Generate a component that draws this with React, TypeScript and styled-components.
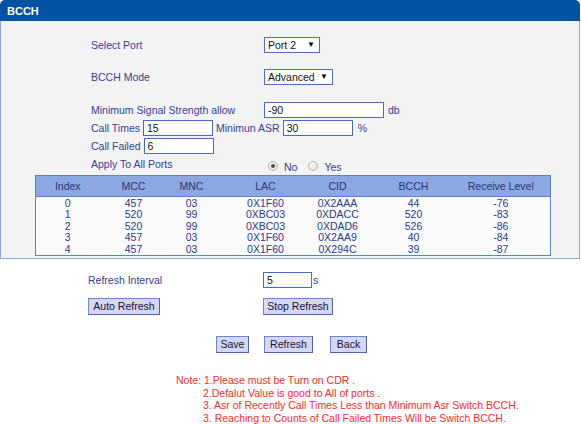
import React from "react";
import styled, { createGlobalStyle } from "styled-components";

const Global = createGlobalStyle`
  html, body { margin: 0; padding: 0; background: #ffffff; }
  body { font-family: "Liberation Sans", Arial, sans-serif; font-size: 10.5px; }
  * { box-sizing: border-box; }
`;

const LABEL = "#34409a";

const Page = styled.div`
  width: 581px;
  height: 424px;
  overflow: hidden;
  font-family: "Liberation Sans", Arial, sans-serif;
  font-size: 10.5px;
`;

const Panel = styled.section`
  width: 580px;
`;

const PanelHeader = styled.div`
  height: 21px;
  background: #0251a4;
  border-radius: 5px 5px 0 0;
  color: #ffffff;
  font-weight: bold;
  font-size: 11px;
  line-height: 22px;
  padding-left: 7px;
`;

const PanelBody = styled.div`
  background: #f3f3f3;
  border: 1px solid #86a4e6;
  border-top: none;
  padding-bottom: 2px;
  display: flex;
  flex-direction: column;
`;

const FieldRow = styled.div<{ $top: number }>`
  display: flex;
  align-items: center;
  margin-top: ${(p) => p.$top}px;
  height: 16px;
  padding-left: 90px;
`;

const Label = styled.span<{ $w?: number }>`
  color: ${LABEL};
  width: ${(p) => (p.$w ? `${p.$w}px` : "auto")};
  flex: none;
  line-height: 16px;
`;

const InlineRow = styled.div<{ $top: number }>`
  display: flex;
  align-items: center;
  gap: 3px;
  margin-top: ${(p) => p.$top}px;
  height: 16px;
  padding-left: 90px;
`;

const Unit = styled.span<{ $gap?: number }>`
  color: ${LABEL};
  margin-left: ${(p) => p.$gap ?? 0}px;
`;

const SelectBox = styled.div<{ $w: number }>`
  width: ${(p) => p.$w}px;
  height: 16px;
  background: #ffffff;
  border: 1px solid #4f6cc6;
  display: flex;
  align-items: center;
  justify-content: space-between;
  padding: 0 4px 0 3px;
  color: #111;
  line-height: 14px;
`;

const Arrow = styled.span`
  font-size: 8px;
  color: #000;
`;

const TextInput = styled.input<{ $w: number }>`
  width: ${(p) => p.$w}px;
  height: 16px;
  border: 1px solid #4a68c8;
  background: #ffffff;
  padding: 0 3px;
  margin: 0;
  font-family: "Liberation Sans", Arial, sans-serif;
  font-size: 10.5px;
  color: #111;
  outline: none;
`;

const ApplyRow = styled.div`
  display: flex;
  align-items: flex-start;
  margin-top: 2px;
  height: 19px;
  padding-left: 90px;
`;

const RadioGroup = styled.div`
  display: flex;
  align-items: center;
  padding-top: 4px;
  padding-left: 4px;
  height: 16px;
  color: ${LABEL};
`;

const Radio = styled.span<{ $checked?: boolean }>`
  width: 10px;
  height: 10px;
  border-radius: 50%;
  border: 1px solid #b4b4b4;
  background: radial-gradient(circle at 40% 35%, #ffffff 0%, #e6e6e6 60%, #d2d2d2 100%);
  display: inline-flex;
  align-items: center;
  justify-content: center;
  margin-right: 6px;
  &::after {
    content: "";
    width: 4px;
    height: 4px;
    border-radius: 50%;
    background: ${(p) => (p.$checked ? "#4a4a4a" : "transparent")};
  }
`;

const RadioText = styled.span<{ $mr?: number }>`
  margin-right: ${(p) => p.$mr ?? 0}px;
  margin-top: 2px;
`;

const Table = styled.table`
  margin-left: 34px;
  width: 515px;
  border: 1px solid #5b80d4;
  border-collapse: collapse;
  table-layout: fixed;
  background: #fafafa;
`;

const Th = styled.th<{ $w: number; $pr?: number }>`
  width: ${(p) => p.$w}px;
  background: #8ba8e2;
  color: #2c3574;
  font-weight: normal;
  height: 21px;
  padding: 0 ${(p) => p.$pr ?? 0}px 0 0;
  text-align: center;
  border-bottom: 1px solid #5b80d4;
`;

const Td = styled.td<{ $pr?: number }>`
  color: #2a3990;
  text-align: center;
  padding: 0 ${(p) => p.$pr ?? 0}px 0 0;
  line-height: 11.6px;
  height: 11.6px;
`;

const FirstRowSpacer = styled.tr`
  height: 1px;
`;

const Below = styled.div`
  display: flex;
  flex-direction: column;
`;

const BelowRow = styled.div<{ $top: number }>`
  display: flex;
  align-items: center;
  margin-top: ${(p) => p.$top}px;
  padding-left: 88px;
  height: 17px;
`;

const Cell = styled.div<{ $w: number }>`
  width: ${(p) => p.$w}px;
  flex: none;
  display: flex;
  align-items: center;
`;

const Button = styled.button<{ $w: number }>`
  width: ${(p) => p.$w}px;
  height: 17px;
  padding: 0;
  margin: 0;
  background: #d6d6f6;
  border: 1px solid #6f84d2;
  border-right-color: #4d5fae;
  border-bottom-color: #4d5fae;
  color: #151530;
  font-family: "Liberation Sans", Arial, sans-serif;
  font-size: 10.5px;
  line-height: 15px;
  text-align: center;
`;

const CenterButtons = styled.div`
  display: flex;
  margin-top: 21px;
  padding-left: 216px;
`;

const Gap = styled.span<{ $w: number }>`
  width: ${(p) => p.$w}px;
  flex: none;
`;

const Note = styled.div`
  display: grid;
  grid-template-columns: 28px auto;
  margin-top: 21px;
  padding-left: 176px;
  color: #ff2a2a;
  line-height: 12.4px;
`;

const NoteLines = styled.div`
  display: flex;
  flex-direction: column;
`;

const NoteLine = styled.span<{ $indent?: number }>`
  margin-left: ${(p) => p.$indent ?? 0}px;
  white-space: nowrap;
`;

const cols = [
  { key: "Index", w: 64 },
  { key: "MCC", w: 68 },
  { key: "MNC", w: 48 },
  { key: "LAC", w: 100 },
  { key: "CID", w: 44 },
  { key: "BCCH", w: 108 },
  { key: "Receive Level", w: 83, pr: 16 },
];

const rows = [
  ["0", "457", "03", "0X1F60", "0X2AAA", "44", "-76"],
  ["1", "520", "99", "0XBC03", "0XDACC", "520", "-83"],
  ["2", "520", "99", "0XBC03", "0XDAD6", "526", "-86"],
  ["3", "457", "03", "0X1F60", "0X2AA9", "40", "-84"],
  ["4", "457", "03", "0X1F60", "0X294C", "39", "-87"],
];

export default function App() {
  return (
    <Page>
      <Global />
      <Panel>
        <PanelHeader>BCCH</PanelHeader>
        <PanelBody>
          <FieldRow $top={16}>
            <Label $w={173}>Select Port</Label>
            <SelectBox $w={56}>
              <span>Port 2</span>
              <Arrow>▼</Arrow>
            </SelectBox>
          </FieldRow>
          <FieldRow $top={16}>
            <Label $w={173}>BCCH Mode</Label>
            <SelectBox $w={69}>
              <span>Advanced</span>
              <Arrow>▼</Arrow>
            </SelectBox>
          </FieldRow>
          <FieldRow $top={17}>
            <Label $w={173}>Minimum Signal Strength allow</Label>
            <TextInput $w={120} defaultValue="-90" />
            <Unit $gap={4}>db</Unit>
          </FieldRow>
          <InlineRow $top={2}>
            <Label>Call Times</Label>
            <TextInput $w={70} defaultValue="15" />
            <Label>Minimun ASR</Label>
            <TextInput $w={70} defaultValue="30" />
            <Unit $gap={2}>%</Unit>
          </InlineRow>
          <InlineRow $top={2}>
            <Label>Call Failed</Label>
            <TextInput $w={70} defaultValue="6" />
          </InlineRow>
          <ApplyRow>
            <Label $w={173}>Apply To All Ports</Label>
            <RadioGroup>
              <Radio $checked />
              <RadioText $mr={11}>No</RadioText>
              <Radio />
              <RadioText>Yes</RadioText>
            </RadioGroup>
          </ApplyRow>
          <Table>
            <thead>
              <tr>
                {cols.map((c) => (
                  <Th key={c.key} $w={c.w} $pr={c.pr}>
                    {c.key}
                  </Th>
                ))}
              </tr>
            </thead>
            <tbody>
              <FirstRowSpacer />
              {rows.map((r) => (
                <tr key={r[0]}>
                  {r.map((v, i) => (
                    <Td key={i} $pr={cols[i].pr}>
                      {v}
                    </Td>
                  ))}
                </tr>
              ))}
            </tbody>
          </Table>
        </PanelBody>
      </Panel>
      <Below>
        <BelowRow $top={12}>
          <Cell $w={175}>
            <Label>Refresh Interval</Label>
          </Cell>
          <TextInput $w={49} defaultValue="5" />
          <Unit $gap={1}>s</Unit>
        </BelowRow>
        <BelowRow $top={10}>
          <Cell $w={175}>
            <Button $w={72}>Auto Refresh</Button>
          </Cell>
          <Button $w={70}>Stop Refresh</Button>
        </BelowRow>
        <CenterButtons>
          <Button $w={33}>Save</Button>
          <Gap $w={15} />
          <Button $w={49}>Refresh</Button>
          <Gap $w={17} />
          <Button $w={37}>Back</Button>
        </CenterButtons>
        <Note>
          <span>Note:</span>
          <NoteLines>
            <NoteLine>1.Please must be Turn on CDR .</NoteLine>
            <NoteLine $indent={-1}>2.Defalut Value is good to All of ports .</NoteLine>
            <NoteLine $indent={-1}>3. Asr of Recently Call Times Less than Minimum Asr Switch BCCH.</NoteLine>
            <NoteLine $indent={-1}>3. Reaching to Counts of Call Failed Times Will be Switch BCCH.</NoteLine>
          </NoteLines>
        </Note>
      </Below>
    </Page>
  );
}
